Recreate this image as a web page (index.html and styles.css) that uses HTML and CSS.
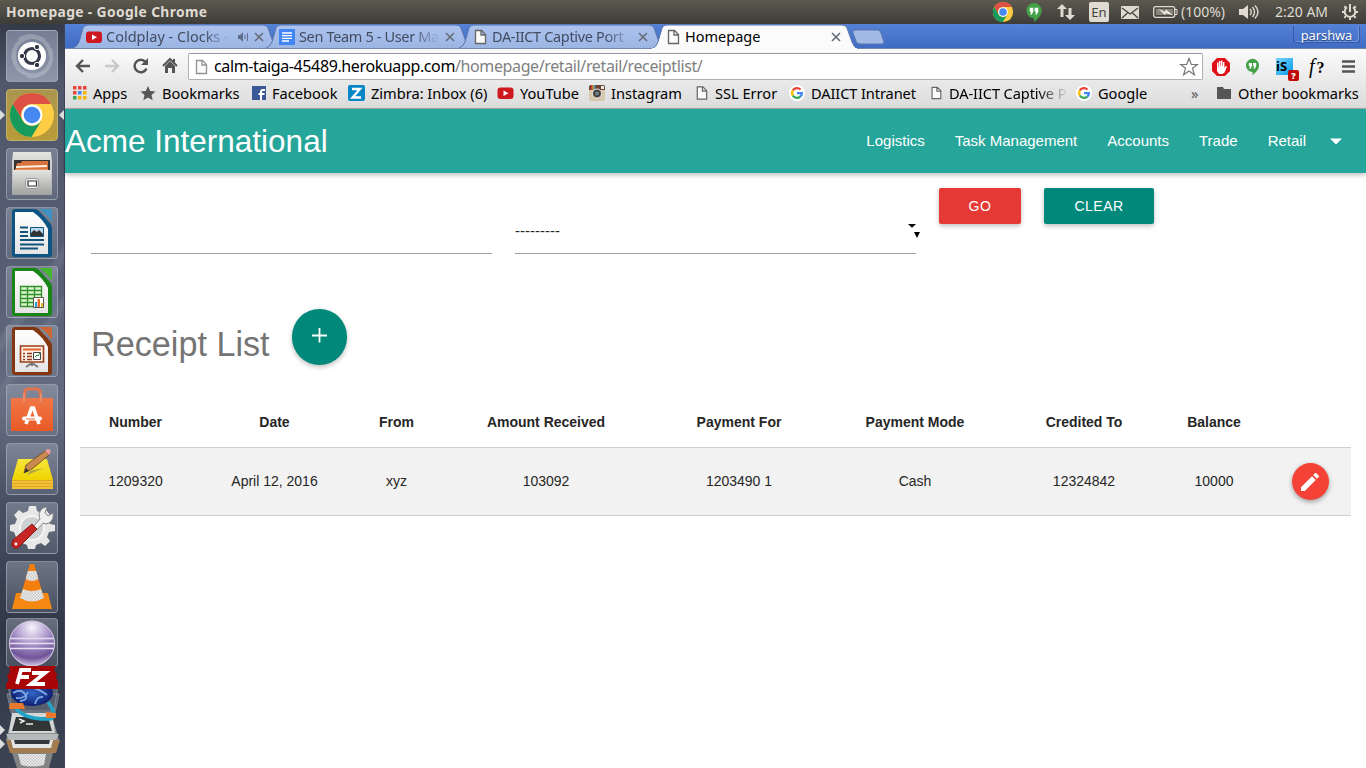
FILE: index.html
```html
<!DOCTYPE html>
<html lang="en">
<head>
<meta charset="utf-8">
<title>Homepage</title>
<link rel="stylesheet" href="styles.css">
</head>
<body>
<svg class="defs" width="0" height="0">
  <defs>
    <linearGradient id="tabfill" x2="0" y2="1"><stop stop-color="#adc3ee"/><stop offset="1" stop-color="#9bb5e3"/></linearGradient>
    <linearGradient id="grey" x2="0" y2="1"><stop stop-color="#e4e4e2"/><stop offset="1" stop-color="#a0a09e"/></linearGradient>
    <linearGradient id="paper" x2="0" y2="1"><stop stop-color="#fff"/><stop offset="1" stop-color="#e4e4e4"/></linearGradient>
    <linearGradient id="orange" x2="0" y2="1"><stop stop-color="#f07747"/><stop offset="1" stop-color="#e95a24"/></linearGradient>
    <linearGradient id="yellow" x2="0" y2="1"><stop stop-color="#f6e53a"/><stop offset="1" stop-color="#efd400"/></linearGradient>
    <radialGradient id="orb" cx=".5" cy=".15" r=".85"><stop stop-color="#f8f5fc"/><stop offset=".5" stop-color="#a08ac3"/><stop offset=".8" stop-color="#705499"/><stop offset="1" stop-color="#d4c7e6"/></radialGradient>
    <radialGradient id="globe"><stop stop-color="#3266c8"/><stop offset="1" stop-color="#101f70"/></radialGradient>
    <pattern id="check" width="3" height="3" patternUnits="userSpaceOnUse"><rect width="3" height="3" fill="#f2f2f2"/><path d="M0 0h1.500v1.500H0zM1.500 1.500H3V3H1.500z" fill="#c4c4c4"/></pattern>
    <symbol id="doc" viewBox="0 0 16 16"><path d="M3.500 1.500h6l4 4v9h-10zM9 1.500v4.500h4.500" fill="#fafafa" stroke="#666" stroke-width="1.300"/></symbol>
    <symbol id="yt" viewBox="0 0 16 16"><rect y="2.500" width="16" height="11.500" rx="3" fill="#cc181e"/><path d="M6 5.500v5.500l5-2.750z" fill="#fff"/></symbol>
    <symbol id="close" viewBox="0 0 10 10"><path d="M1 1l8 8M9 1L1 9" stroke="#666b78" stroke-width="1.600"/></symbol>
    <symbol id="chrome" viewBox="0 0 48 48"><circle cx="24" cy="24" r="22" fill="#ffcd43"/><path d="M4.900 13A22 22 0 0 1 43.100 13H24A11 11 0 0 0 14.500 29.500z" fill="#dd5044"/><path d="M4.900 13A22 22 0 0 0 23.500 46L33.500 29.500A11 11 0 0 1 14.500 29.500z" fill="#179b5c"/><path d="M43.100 13H24l9.500 16.500z" fill="#ffcd43"/><circle cx="24" cy="24" r="10.500" fill="#fff"/><circle cx="24" cy="24" r="8.300" fill="#4688f1"/></symbol>
    <symbol id="hang" viewBox="0 0 18 22"><path d="M9 1a8 8 0 0 1 8 8c0 5-4 9-8 12v-4A8 8 0 0 1 9 1z" fill="#44a047"/><path d="M4.500 6h3.800v4.200L6.600 13H5l1-2.800H4.500zM9.700 6h3.800v4.200L11.800 13h-1.600l1-2.800H9.700z" fill="#fff"/></symbol>
    <symbol id="google" viewBox="0 0 16 16"><circle cx="8" cy="8" r="8" fill="#fff"/><g fill="none" stroke-width="2.300"><path d="M3.900 5.300A4.900 4.900 0 0 1 11.500 4.500" stroke="#ea4335"/><path d="M3.900 10.700a4.900 4.900 0 0 1 0-5.400" stroke="#fbbc05"/><path d="M11.300 11.600a4.900 4.900 0 0 1-7.400-.9" stroke="#34a853"/><path d="M8 8.200h4.900a4.900 4.900 0 0 1-1.600 3.400" stroke="#4285f4"/></g></symbol>
    <symbol id="sheet" viewBox="0 0 52 52"><path d="M6 5q0-3 3-3h19q3 0 5 2l11 12q2 2 2 5v26q0 3-3 3H9q-3 0-3-3z" fill="currentColor"/><path d="M9 5h18q10 7 15 17v25H9z" fill="url(#paper)"/></symbol>
  </defs>
</svg>

<header class="panel">
  <span class="panel-title">Homepage - Google Chrome</span>
  <div class="indicators">
    <svg width="22" height="22"><use href="#chrome"/></svg>
    <svg width="18" height="21"><use href="#hang"/></svg>
    <svg width="20" height="18" viewBox="0 0 20 18" fill="#dfdbd2"><path d="M6 1l5 5H7.500v8h-3V6H1zM14 17l-5-5h3.500V5h3v7H19z"/></svg>
    <span class="lang">En</span>
    <svg width="18" height="13" viewBox="0 0 18 13"><rect width="18" height="13" rx="1" fill="#dfdbd2"/><path d="M1 2l8 6 8-6M1 12l5.500-5M17 12l-5.500-5" fill="none" stroke="#45433d" stroke-width="1.300"/></svg>
    <div class="battery"><svg width="25" height="14" viewBox="0 0 25 14"><rect x=".7" y="1.700" width="21" height="10.600" rx="2" fill="none" stroke="#dfdbd2" stroke-width="1.300"/><path d="M3 4h17v6H3z" fill="#88857c"/><path d="M22 4.500h2v5h-2" fill="none" stroke="#dfdbd2"/><path d="M5 3.500l7 3.500 1-2.500 7 6-7-2.500-1 2z" fill="#f4f0e8"/></svg><span>(100%)</span></div>
    <svg width="21" height="16" viewBox="0 0 21 16"><path d="M0 5h4l5-4v14l-5-4H0z" fill="#dfdbd2"/><path d="M11 5q2.500 3 0 6M13.500 3q4 5 0 10M16 1.500q6 6.500 0 13" fill="none" stroke="#dfdbd2" stroke-width="1.400"/></svg>
    <span class="clock">2:20 AM</span>
    <svg width="18" height="18" viewBox="0 0 18 18"><g fill="none" stroke="#dfdbd2"><path d="M6 4.300a5.300 5.300 0 1 0 6 0" stroke-width="2"/><path d="M9 1v8M1 9h2M15 9h2M3.300 3.300l1.500 1.500M14.700 3.300l-1.500 1.500M3.300 14.700l1.500-1.500M14.700 14.700l-1.500-1.500M9 15v2" stroke-width="2"/></g></svg>
  </div>
</header>

<div class="desktop">
  <nav class="launcher">
    <div class="tile dash"><svg viewBox="0 0 52 52"><g fill="none" stroke="#fff" stroke-opacity=".22" stroke-width="4"><path d="M8 31C5 14 20 1 38 10M44 19c5 15-5 29-23 27M13 10C26 1 43 9 45 26M39 42C22 51 7 40 8 24"/></g><circle cx="26" cy="26" r="14" fill="#fff"/><circle cx="26" cy="26" r="7.500" fill="none" stroke="#333947" stroke-width="3.200"/><g fill="#333947" stroke="#fff"><circle cx="16" cy="26" r="2.700"/><circle cx="31" cy="17" r="2.700"/><circle cx="31" cy="35" r="2.700"/></g></svg></div>
    <div class="tile gold focused"><svg viewBox="0 0 52 52"><use href="#chrome" x="2" y="2" width="48" height="48"/></svg></div>
    <div class="tile"><svg viewBox="0 0 52 52"><path d="M7 4h38l1 10v33H6V14z" fill="url(#grey)"/><path d="M8 12h36v12H8z" fill="#333"/><path d="M9 23l2-8h4l1-2h26v10z" fill="#d9743f"/><path d="M10 18l31-1v2l-31 1z" fill="#fff1df"/><path d="M9 22h33" stroke="#f3b47d"/><path d="M7 22h38l1 25H6z" fill="url(#grey)"/><rect x="19.500" y="30.500" width="13" height="10" rx="2.500" fill="#eee" stroke="#999"/><path d="M22 33h8.500v5H22z" fill="#fff" stroke="#333" stroke-width="1.200"/></svg></div>
    <div class="tile writer"><svg viewBox="0 0 52 52"><use href="#sheet"/><path d="M33 2h11q2 0 2 2v11Q41 7 33 2z" fill="#3f91c3"/><path d="M14 20.500h8M14 25h8M14 29h8M14 33h24M14 37.500h24M14 41.500h18" stroke="#10547c" stroke-width="1.900"/><path d="M24.500 20.500h13v9h-13z" fill="#b9d8ed" stroke="#0c5481"/><path d="M25 29v-3l3-3 3 2 2-2 4 4v2z" fill="#333"/></svg></div>
    <div class="tile calc"><svg viewBox="0 0 52 52"><use href="#sheet"/><path d="M33 2h11q2 0 2 2v11Q41 7 33 2z" fill="#45b52f"/><path d="M14.500 20.500h21v20h-21zM14.500 24.500h21M14.500 28.500h21M14.500 32.500h21M14.500 36.500h21M21.500 20.500v20M28.500 20.500v20" fill="#d9f5cb" stroke="#31902a" stroke-width="1.300"/><path d="M27.500 31.500h10v10h-10z" fill="#fff" stroke="#555"/><path d="M29 36h2v5h-2z" fill="#249fdd"/><path d="M31.500 33H34v8h-2.500z" fill="#eb6d20"/><path d="M35 37h2v4h-2z" fill="#f0bd1b"/></svg></div>
    <div class="tile impress"><svg viewBox="0 0 52 52"><use href="#sheet"/><path d="M33 2h11q2 0 2 2v11Q41 7 33 2z" fill="#cb6735"/><path d="M14.500 21h23v16h-23z" fill="#fff0e7" stroke="#9c3e15" stroke-width="1.600"/><path d="M17 24.500h18" stroke="#e1672d" stroke-width="2"/><path d="M17 28.500h2M17 31.500h2M17 34.500h2M21 28.500h5M21 31.500h5M21 34.500h5" stroke="#8f391c" stroke-width="1.700"/><path d="M27.500 27.500h7v7h-7z" fill="#fff" stroke="#444"/><path d="M29 32l2-2 1 1 2-3" fill="none" stroke="#269333"/><path d="M26 38l-6 4M26 38l6 4M26 37v4" stroke="#777" stroke-width="2"/></svg></div>
    <div class="tile"><svg viewBox="0 0 52 52"><path d="M18 18l1-11q1-2 3-2h9q2 0 3 2l1 11" fill="none" stroke="#e2714d" stroke-width="3"/><path d="M5 14h42v33H5z" fill="url(#orange)"/><path d="M18 18V9M35 18V9" stroke="#e88a6c" stroke-width="2"/><path d="M20 40l5.500-16h2L33 40" fill="none" stroke="#fff" stroke-width="3.600"/><path d="M18 34.500h16" stroke="#fff" stroke-width="4" stroke-linecap="round"/><path d="M20 35h9" stroke="#e9683a" stroke-width="1"/></svg></div>
    <div class="tile"><svg viewBox="0 0 52 52"><path d="M6 37v9h41v-9z" fill="#e5a51d"/><path d="M6 39h41M6 42h41M6 45h41" stroke="#f9dc59"/><path d="M12 16h29l6 21H6z" fill="url(#yellow)"/><path d="M24 28l14-3-17 7z" fill="#a7a34a"/><path d="M20 22l19-14 4 4-17 14-8 4z" fill="#c98a4d" stroke="#6b4224" stroke-width=".8"/><path d="M39 8q4-4 6 0l-2 4z" fill="#f09a9a"/><path d="M18 30l2-5 3 3z" fill="#333"/></svg></div>
    <div class="tile"><svg viewBox="0 0 52 52"><path d="M23 4h7l1 5 5 2 4-3 5 6-3 4 2 4 5 1v6l-6 1-2 5 3 4-5 5-4-3-5 2-1 4h-7l-1-4-5-2-4 3-5-5 3-4-2-5-4-1v-6l5-1 2-5-3-4 5-5 4 3 5-2z" fill="#e6e7e6"/><circle cx="26" cy="26" r="12" fill="#cfd2d4" stroke="#f3f3f3" stroke-width="2"/><path d="M27 25l7-8q-3-6 3-11l4-1-2 6 3 3 5-3q1 7-4 10-3 2-6 0l-6 7z" fill="#efefef" stroke="#888"/><path d="M26 22l5 5-18 18q-4 3-7-1-1-3 1-6z" fill="#c62624" stroke="#851b1b"/><circle cx="10" cy="42" r="1.400" fill="#fff"/></svg></div>
    <div class="tile"><svg viewBox="0 0 52 52"><path d="M10 32h32l4 16H6z" fill="#f58813"/><path d="M24 3h4l10 34q-12 7-24 0z" fill="#f47e0e"/><path d="M21.800 10h8.400l2.200 8q-6.400 4-12.800 0zM17 28q9 4 18 0l3 9q-12 7-24 0z" fill="url(#check)"/></svg></div>
    <div class="tile orb"><svg viewBox="0 0 52 49"><circle cx="26" cy="25.500" r="22.500" fill="url(#orb)" stroke="#d8cce8"/><path d="M4 20.500h44M3.500 25.500h45M4 30.500h44" stroke="#e7def2" stroke-width="1.600"/></svg></div>
    <svg class="folded" viewBox="0 0 66 103">
      <g fill="#b9c0ca" fill-opacity=".25" stroke="#c1c6d0" stroke-opacity=".4"><path d="M8 20h50l-4 26H12zM7 29h52l-4 19H11z"/></g>
      <ellipse cx="32" cy="28" rx="21" ry="13" fill="url(#globe)"/><path d="M13 28q8-5 12 1t-5 7M29 22q9 1 18 8M35 39q2-8 8-7M16 33q9 1 12-6" fill="none" stroke="#7aa6e5" stroke-width="1.800"/>
      <path d="M9 1h47l-2 4 3 4-1 4 2 4v7H6v-5l3-4-2-4 3-4z" fill="#a80507"/>
      <path d="M17 19l4-14h10M19 12h10M32 8h13L31 19h14" fill="none" stroke="#fff" stroke-width="3.800"/>
      <path d="M13 48h38l8 27H6z" fill="#8e9294"/><path d="M12 48h40l3 20H9z" fill="#d5d7d7"/><path d="M16 52h32l4 14H12z" fill="#313536"/><path d="M19 54l5 2-4 2M26 59h7" fill="none" stroke="#eee" stroke-width="1.500"/>
      <path d="M14 41q9 14 36 13 8-3-2-17" fill="none" stroke="#21a4c5" stroke-width="3.500"/><path d="M10 38h13l2 6H9zM46 47l10 1v5H46z" fill="#e7782d"/>
      <path d="M6 75h54l-4 13H10z" fill="#a37c52"/><path d="M6 69h53l-3 6H9z" fill="#b7b9b9"/><path d="M11 75h42l-2 8H13z" fill="#e4e5e5"/><path d="M14 75h36l-1 4H15z" fill="#34383a"/>
      <path d="M12 88h41l-4 15H17z" fill="#8f8e8c" fill-opacity=".85"/><path d="M18 89h28l-2 11q-12 3-23 0z" fill="url(#check)"/>
      <path d="M0 60l5 5-5 5zM0 74l5 5-5 5z" fill="#ddd"/>
    </svg>
  </nav>

  <main class="window">
    <div class="tabstrip">
      <div class="tab">
        <svg class="shape" viewBox="0 0 205 24"><path d="M0 24Q4 23 6 18L10 4Q11 1 15 1H190Q194 1 195 4L200 18Q202 23 205 24" fill="url(#tabfill)" stroke="#5975ab"/></svg>
        <svg class="fav" width="16" height="16"><use href="#yt"/></svg><span class="title faded audio">Coldplay - Clocks -</span>
        <svg class="sound" width="11" height="10" viewBox="0 0 11 10"><path d="M0 3h2l3-3v10L2 7H0z" fill="#62708e"/><path d="M7 3v4M9.500 1v8" stroke="#62708e"/></svg><svg class="x" width="10" height="10"><use href="#close"/></svg>
      </div>
      <div class="tab">
        <svg class="shape" viewBox="0 0 205 24"><path d="M0 24Q4 23 6 18L10 4Q11 1 15 1H190Q194 1 195 4L200 18Q202 23 205 24" fill="url(#tabfill)" stroke="#5975ab"/></svg>
        <svg class="fav" width="16" height="16" viewBox="0 0 16 16"><path d="M0 0h16v16H0z" fill="#4285f4"/><path d="M3 4h10M3 6.700h10M3 9.300h10M3 12h7" stroke="#fff" stroke-width="1.300"/></svg><span class="title faded">Sen Team 5 - User Ma</span><svg class="x" width="10" height="10"><use href="#close"/></svg>
      </div>
      <div class="tab">
        <svg class="shape" viewBox="0 0 205 24"><path d="M0 24Q4 23 6 18L10 4Q11 1 15 1H190Q194 1 195 4L200 18Q202 23 205 24" fill="url(#tabfill)" stroke="#5975ab"/></svg>
        <svg class="fav" width="16" height="16"><use href="#doc"/></svg><span class="title faded">DA-IICT Captive Port</span><svg class="x" width="10" height="10"><use href="#close"/></svg>
      </div>
      <div class="tab active">
        <svg class="shape" viewBox="0 0 205 25"><path d="M0 25Q4 23 6 18L10 4Q11 1 15 1H190Q194 1 195 4L200 18Q202 23 205 25" fill="#fbfbfb" stroke="#5975ab"/><path d="M0 24.500h205" stroke="#fbfbfb"/></svg>
        <svg class="fav" width="16" height="16"><use href="#doc"/></svg><span class="title">Homepage</span><svg class="x" width="10" height="10"><use href="#close"/></svg>
      </div>
      <svg class="newtab" width="33" height="17" viewBox="0 0 33 17"><path d="M3 1h23q2 0 3 3l3 9q0 2-2 2H8q-3 0-4-3L1 4q-1-3 2-3z" fill="#a3bae7" stroke="#5876ac"/></svg>
      <span class="profile">parshwa</span>
    </div>

    <div class="toolbar">
      <div class="navbtns">
        <svg width="18" height="18" viewBox="0 0 18 18"><path d="M16 9H4M9 3L3 9l6 6" fill="none" stroke="#555" stroke-width="2.400"/></svg>
        <svg width="18" height="18" viewBox="0 0 18 18"><path d="M2 9h12M9 3l6 6-6 6" fill="none" stroke="#c8c8c8" stroke-width="2.400"/></svg>
        <svg width="18" height="18" viewBox="0 0 18 18"><path d="M14.500 11.500A6.200 6.200 0 1 1 13.500 5" fill="none" stroke="#555" stroke-width="2.500"/><path d="M16 1v7H9z" fill="#555"/></svg>
        <svg width="18" height="18" viewBox="0 0 18 18"><path d="M2 9l7-7 7 7M13 2v4" fill="none" stroke="#555" stroke-width="2"/><path d="M4 9l5-5 5 5v7h-3v-5H7v5H4z" fill="#555"/></svg>
      </div>
      <div class="omnibox"><svg class="page-icon" width="16" height="16"><use href="#doc"/></svg><span class="url">calm-taiga-45489.herokuapp.com<i>/homepage/retail/retail/receiptlist/</i></span>
        <svg width="20" height="20" viewBox="0 0 20 20"><path d="M10 1.500l2.300 6h6L13.500 11.300l1.900 6.500L10 14l-5.400 3.800 1.900-6.500L1.700 7.500h6z" fill="#fff" stroke="#777" stroke-width="1.200"/></svg></div>
      <div class="extensions">
        <svg width="18" height="18" viewBox="0 0 18 18"><path d="M5 0h8l5 5v8l-5 5H5l-5-5V5z" fill="#df1118"/><path d="M5 9V4.500h1.400V9h.5V3h1.500v5h.5V2.500h1.500V8h.5V4h1.500v6l1.300-2 1.300.5-2.500 6-2 1.500H7l-2-3z" fill="#fff"/></svg>
        <svg width="15" height="18" viewBox="0 0 18 22"><use href="#hang"/></svg>
        <div class="isx">iS<b>?</b></div>
        <span class="fx"><i>f</i><b>?</b></span>
        <svg width="13" height="13" viewBox="0 0 13 13"><path d="M0 1.500h13M0 6.500h13M0 11.500h13" stroke="#555" stroke-width="2.500"/></svg>
      </div>
    </div>

    <div class="bookmarks">
      <a><svg class="bi" width="14" height="14" viewBox="0 0 14 14"><path d="M0 0h3.500v3.500H0zM5 0h3.500v3.500H5zM10 0h3.500v3.500H10zM0 5h3.500v3.500H0z" fill="#e8453c"/><path d="M5 5h3.500v3.500H5z" fill="#4285f4"/><path d="M10 5h3.500v3.500H10zM5 10h3.500v3.500H5zM10 10h3.500v3.500H10z" fill="#f5b400"/><path d="M0 10h3.500v3.500H0z" fill="#35a55a"/></svg><span>Apps</span></a>
      <a><svg class="bi" width="16" height="16" viewBox="0 0 16 16"><path d="M8 1l2.200 5 5.300.5-4 3.500 1.200 5.300L8 12.500l-4.700 2.800L4.500 10l-4-3.500L5.800 6z" fill="#555"/></svg><span>Bookmarks</span></a>
      <a><svg class="bi" width="15" height="15" viewBox="0 0 15 15"><path d="M1 1h14v14H1z" fill="#3b5998"/><path d="M10 15V7q0-2 2-2h2M7.500 9h6" fill="none" stroke="#fff" stroke-width="2"/></svg><span>Facebook</span></a>
      <a><svg class="bi" width="17" height="16" viewBox="0 0 17 16"><rect width="17" height="16" rx="2" fill="#0786c6"/><path d="M4 4h8l-7.500 8.500H13" fill="none" stroke="#fff" stroke-width="2.300"/></svg><span>Zimbra: Inbox (6)</span></a>
      <a><svg class="bi" width="17" height="16"><use href="#yt"/></svg><span>YouTube</span></a>
      <a><svg class="bi wide" width="16" height="16" viewBox="0 0 16 16"><rect width="16" height="16" rx="2" fill="#d7c8ad"/><path d="M0 2q0-2 2-2h12q2 0 2 2v3H0z" fill="#6a4535"/><path d="M2 0h1.300v5H2z" fill="#d33"/><path d="M3.500 0h1.300v5H3.500z" fill="#e4b440"/><path d="M5 0h1.300v5H5z" fill="#359bc0"/><circle cx="8" cy="8.500" r="4.500" fill="#433d39" stroke="#eee"/><circle cx="8" cy="8.500" r="2" fill="#70818a"/><path d="M12 1h3v3h-3z" fill="#eee"/></svg><span>Instagram</span></a>
      <a><svg class="bi" width="15" height="16"><use href="#doc"/></svg><span>SSL Error</span></a>
      <a><svg class="bi" width="16" height="16"><use href="#google"/></svg><span class="tight">DAIICT Intranet</span></a>
      <a><svg class="bi" width="14" height="16"><use href="#doc"/></svg><span class="fade-end">DA-IICT Captive P</span></a>
      <a><svg class="bi wide" width="16" height="16"><use href="#google"/></svg><span>Google</span></a>
      <a class="more">»</a>
      <a><svg class="bi" width="16" height="14" viewBox="0 0 16 14"><path d="M1 1h6l1 2h7v10H1z" fill="#555"/></svg><span>Other bookmarks</span></a>
    </div>

    <section class="page">
      <nav class="site-nav">
        <a class="brand">Acme International</a>
        <div class="links"><a>Logistics</a><a>Task Management</a><a>Accounts</a><a>Trade</a><a>Retail</a><svg width="12" height="7"><path d="M0 .5h12L6 6.500z" fill="#fff"/></svg></div>
      </nav>
      <form class="filters">
        <div class="field"></div>
        <div class="field select"><span>---------</span><svg class="carets" width="13" height="16" viewBox="0 0 13 16"><path d="M1 1h8L5 4.700zM7 9h6l-3 6z"/></svg></div>
        <div class="actions"><button type="button" class="btn go">GO</button><button type="button" class="btn clear">CLEAR</button></div>
      </form>
      <div class="heading"><h4>Receipt List</h4><a class="fab"><svg width="15" height="15" viewBox="0 0 15 15"><path d="M7.500 0v14.500M0 7.500h15" stroke="#fff" stroke-width="1.800"/></svg></a></div>
      <table class="receipts">
        <colgroup><col class="c1"><col class="c2"><col class="c3"><col class="c4"><col class="c5"><col class="c6"><col class="c7"><col class="c8"><col class="c9"></colgroup>
        <thead><tr><th>Number</th><th>Date</th><th>From</th><th>Amount Received</th><th>Payment For</th><th>Payment Mode</th><th>Credited To</th><th>Balance</th><th></th></tr></thead>
        <tbody><tr><td>1209320</td><td>April 12, 2016</td><td>xyz</td><td>103092</td><td>1203490 1</td><td>Cash</td><td>12324842</td><td>10000</td><td><a class="edit"><svg width="24" height="24" viewBox="0 0 24 24"><path d="M3 17.250V21h3.750L17.810 9.940l-3.750-3.750L3 17.250zM20.710 7.040c.390-.390.390-1.020 0-1.410l-2.340-2.340c-.390-.390-1.020-.390-1.410 0l-1.830 1.830 3.750 3.750 1.830-1.830z" fill="#fff"/></svg></a></td></tr></tbody>
      </table>
    </section>
  </main>
</div>
</body>
</html>
```
FILE: styles.css
```css
* { box-sizing: border-box; }
body { margin: 0; width: 1366px; height: 768px; overflow: hidden; display: flex; flex-direction: column; font-family: "Noto Sans", sans-serif; background: #fff; }
svg { display: block; flex: none; }
.defs { position: absolute; }

.panel { height: 24px; flex: none; display: flex; align-items: center; justify-content: space-between; padding: 0 7px 0 6px; background: linear-gradient(#5c594e, #3d3c38); color: #dfdbd2; font-size: 14px; line-height: 24px; }
.panel-title { font-weight: bold; font-size: 13.800px; letter-spacing: .38px; white-space: nowrap; }
.indicators { display: grid; grid-template-columns: 33px 31px 32px 33px 32px 86px 35px 67px 18px; align-items: center; }
.lang { width: 20px; height: 20px; border-radius: 2px; background: #dfdbd2; color: #45433d; text-align: center; font-size: 13px; line-height: 20px; margin-left: 1px; }
.battery { display: flex; align-items: center; gap: 3px; }
.clock { white-space: nowrap; margin-left: 1px; }

.desktop { flex: 1; display: flex; min-height: 0; }
.launcher { width: 65px; flex: none; padding: 6px 0 0 6px; display: flex; flex-direction: column; gap: 7px; background: linear-gradient(125deg, transparent 37%, #8a91a444 38% 39%, transparent 40% 43%, #8a91a444 44%, transparent 46%), linear-gradient(#343a47, #50576a 8%, #555e73 32%, #646d81 52%, #485064 64%, #303746 82%, #3c4353); border-right: 1px solid #3d4556; overflow: hidden; }
.tile { width: 52px; height: 52px; flex: none; border-radius: 4px; border: 1px solid #b4bac688; background: linear-gradient(#a4abb977, #868d9c44); position: relative; }
.tile svg { width: 52px; height: 52px; margin: -1px; }
.dash { background: linear-gradient(#757e94, #8d96a9); }
.gold { background: linear-gradient(#aa9650, #b99b38); border-color: #c5b16b; }
.writer { color: #0c5481; }
.calc { color: #198516; }
.impress { color: #843611; }
.focused::before, .focused::after { content: ""; position: absolute; top: 20px; border: 5px solid transparent; }
.focused::before { left: -7px; border-left-color: #ddd; border-right: 0; }
.focused::after { right: -7px; border-right-color: #ddd; border-left: 0; }
.orb { height: 49px; margin-top: -2px; }
.orb svg { height: 49px; }
.folded { width: 66px; height: 103px; margin: -9px 0 0 -6px; position: relative; }

.window { width: 1301px; display: flex; flex-direction: column; }
.tabstrip { height: 25px; flex: none; display: flex; align-items: flex-start; padding-left: 8px; background: linear-gradient(#5581d6, #3f6bc3); border-bottom: 1px solid #7487aa; }
.tab { width: 205px; height: 24px; margin-right: -12px; flex: none; display: flex; align-items: center; padding: 1px 16px 0 13px; position: relative; font-size: 14.500px; color: #444c62; }
.tab > * { position: relative; }
.tab .shape { position: absolute; left: 0; top: 0; width: 205px; height: 24px; }
.title { flex: 1; margin: -2px 0 0 4px; white-space: nowrap; line-height: 22px; }
.faded { margin-right: 5px; letter-spacing: -.35px; -webkit-mask-image: linear-gradient(90deg, #000 80%, transparent); mask-image: linear-gradient(90deg, #000 80%, transparent); }
.audio { margin-right: 9px; letter-spacing: 0; }
.sound { margin-right: 5px; }
.active { color: #000; z-index: 1; height: 25px; }
.active .shape { height: 25px; }
.newtab { margin: 5px 0 0 7px; }
.profile { margin: 2px 6px 0 auto; width: 67px; height: 17px; border: 1px solid #3459a6; border-top: 0; border-radius: 0 0 3px 3px; box-shadow: inset -1px -1px #7898d8; text-align: center; color: #fff; font-size: 12.800px; line-height: 18px; text-shadow: 0 1px 1px #223c77; }

.toolbar { height: 33px; flex: none; display: flex; background: linear-gradient(#fbfbfb, #e9e9e9); padding: 4px 0 0 9px; }
.navbtns { width: 114px; display: flex; gap: 11px; padding-top: 4px; }
.omnibox { width: 1015px; height: 27px; border: 1px solid #b0b0b0; border-top-color: #999; border-radius: 2px; background: #fff; display: flex; align-items: center; padding: 0 3px 0 4px; }
.page-icon { opacity: .7; }
.url { flex: 1; margin: -1px 0 0 5px; font-size: 16px; letter-spacing: -.38px; line-height: 24px; white-space: nowrap; }
.url i { font-style: normal; color: #808080; }
.extensions { display: grid; grid-template-columns: 33px 31px 33px 33px 13px; align-items: center; margin-left: 9px; height: 27px; }
.isx { width: 17px; height: 17px; background: linear-gradient(135deg, #78d5ff, #079bea); font-size: 13px; line-height: 16px; font-weight: bold; position: relative; }
.isx b { position: absolute; left: 12px; top: 12px; width: 11px; height: 11px; border-radius: 2px; background: #c10b0b; color: #fff; font-size: 9px; line-height: 11px; text-align: center; }
.fx { font: 20px "Liberation Serif", serif; white-space: nowrap; }
.fx b { font-size: 16px; margin-left: 2px; }
.bookmarks { height: 27px; flex: none; display: grid; grid-template-columns: 67px 111px 97px 149px 92px 105px 95px 140px 147px 114px 26px 142px; padding: 0 0 5px 8px; background: linear-gradient(#e9e9e9, #dcdcdc); border-bottom: 1px solid #a8a8a8; font-size: 14.600px; color: #000; }
.bookmarks a { display: flex; align-items: center; white-space: nowrap; }
.bi { margin-right: 6px; }
.bi + span { margin-right: -2px; }
.wide { margin-right: 6px; }
.tight { letter-spacing: -.1px; }
.fade-end { width: 119px; letter-spacing: -.1px; -webkit-mask-image: linear-gradient(90deg, #000 75%, transparent); mask-image: linear-gradient(90deg, #000 75%, transparent); }
.bookmarks .more { color: #555; padding-left: 1px; }

.page { flex: 1; background: #fff; font-family: "Liberation Sans", Arial, sans-serif; color: #262626; }
.site-nav { height: 64px; background: #26a69a; color: #fff; display: flex; align-items: center; justify-content: space-between; padding-right: 24px; box-shadow: 0 2px 5px rgba(0,0,0,.26); }
.brand { font-size: 31.500px; }
.links { display: flex; align-items: center; gap: 30px; font-size: 15px; }
.links a { padding-bottom: 2px; }
.links svg { margin-left: -6px; }
.filters { display: flex; padding-left: 26px; }
.field { width: 401px; height: 81px; border-bottom: 1px solid #9e9e9e; margin-right: 23px; }
.select { display: flex; justify-content: space-between; font-size: 15px; padding-top: 49px; }
.carets { margin: 1px -4px 0 0; }
.actions { display: flex; gap: 23px; padding-top: 15px; }
.btn { height: 36px; border: 0; border-radius: 2px; color: #fff; font: 14px "Liberation Sans", Arial, sans-serif; letter-spacing: .5px; box-shadow: 0 2px 5px rgba(0,0,0,.26); padding: 0; }
.go { width: 82px; background: #e53935; }
.clear { width: 110px; background: #00897b; }
.heading { display: flex; padding: 55px 0 0 26px; gap: 22px; }
.heading h4 { margin: 15px 0 0; font-size: 34.200px; line-height: 40px; font-weight: normal; color: #757575; }
.fab { width: 55.500px; height: 55.500px; border-radius: 50%; background: #00897b; display: flex; align-items: center; justify-content: center; box-shadow: 0 2px 5px rgba(0,0,0,.26); padding-bottom: 2px; }
.receipts { width: 1271px; margin: 32px 0 0 15px; table-layout: fixed; border-collapse: collapse; font-size: 14px; text-align: center; }
.receipts th, .receipts td { padding: 0; text-align: center; }
.receipts td { padding-bottom: 2px; }
.receipts td:last-child { padding: 0; }
.receipts thead tr { height: 51px; border-bottom: 1px solid #d0d0d0; }
.receipts tbody tr { height: 68px; background: #f2f2f2; border-bottom: 1px solid #d0d0d0; }
.c1 { width: 111px; } .c2 { width: 167px; } .c3 { width: 77px; } .c4 { width: 222px; } .c5 { width: 164px; } .c6 { width: 188px; } .c7 { width: 150px; } .c8 { width: 110px; } .c9 { width: 82px; }
.edit { width: 37px; height: 37px; margin: 0 auto; border-radius: 50%; background: #f44336; display: flex; align-items: center; justify-content: center; box-shadow: 0 2px 5px rgba(0,0,0,.35); }
```
